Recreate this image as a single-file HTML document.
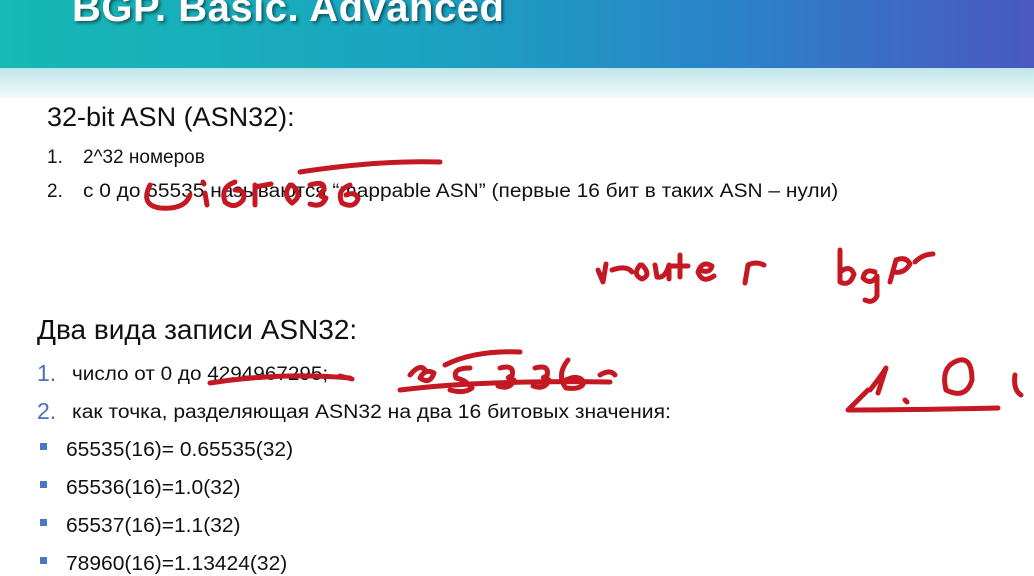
<!DOCTYPE html>
<html><head><meta charset="utf-8"><style>
html,body{margin:0;padding:0;width:1034px;height:575px;overflow:hidden;background:#fff;font-family:"Liberation Sans","DejaVu Sans",sans-serif;color:#111}
.hdr{position:absolute;left:0;top:0;width:1034px;height:68px;background:linear-gradient(90deg,#17b8b5 0%,#1aa4c0 40%,#2a84c8 70%,#4a58c0 100%)}
.fade{position:absolute;left:0;top:68px;width:1034px;height:30px;background:linear-gradient(180deg,#bfe6ea 0%,#f4f8fb 100%)}
.title{position:absolute;left:72px;top:-14px;font-size:40px;color:#fff;font-weight:bold;text-shadow:2px 2px 3px rgba(0,0,0,.5);letter-spacing:0.5px}
.t{position:absolute;white-space:nowrap;transform-origin:left top}
.h{font-size:27px}
.s{font-size:19px}
.n{color:#4a70b8}
.b{position:absolute;width:7px;height:7px;background:#4a78c8}
</style></head><body>
<div class="hdr"></div><div class="fade"></div>
<div class="title">BGP. Basic. Advanced</div>
<div class="t h" style="left:47px;top:102px">32-bit ASN (ASN32):</div>
<div class="t s" style="left:47px;top:147px">1.<span style="position:absolute;left:36px">2^32 номеров</span></div>
<div class="t s" style="left:47px;top:181px">2.<span style="position:absolute;left:36px;transform:scaleX(1.1);transform-origin:left">с 0 до 65535 называются “mappable ASN” (первые 16 бит в таких ASN – нули)</span></div>
<div class="t h" style="left:37px;top:314px;font-size:28px">Два вида записи ASN32:</div>
<div class="t s" style="left:37px;top:360px"><span class="n" style="font-size:23px">1.</span><span style="position:absolute;left:35px;top:4px;transform:scaleX(1.09);transform-origin:left">число от 0 до 4294967295;</span></div>
<div class="t s" style="left:37px;top:398px"><span class="n" style="font-size:23px">2.</span><span style="position:absolute;left:35px;top:4px;transform:scaleX(1.11);transform-origin:left">как точка, разделяющая ASN32 на два 16 битовых значения:</span></div>
<div class="b" style="left:40px;top:443px"></div><div class="t s" style="left:66px;top:439px;font-size:20px;transform:scaleX(1.05)">65535(16)= 0.65535(32)</div>
<div class="b" style="left:40px;top:481px"></div><div class="t s" style="left:66px;top:477px;font-size:20px;transform:scaleX(1.05)">65536(16)=1.0(32)</div>
<div class="b" style="left:40px;top:519px"></div><div class="t s" style="left:66px;top:515px;font-size:20px;transform:scaleX(1.05)">65537(16)=1.1(32)</div>
<div class="b" style="left:40px;top:557px"></div><div class="t s" style="left:66px;top:553px;font-size:20px;transform:scaleX(1.05)">78960(16)=1.13424(32)</div>
<svg style="position:absolute;left:0;top:0" width="1034" height="575" fill="none" stroke="#c41822" stroke-width="5" stroke-linecap="round" stroke-linejoin="round">
<path d="M150 185 Q140 205 160 208 Q185 210 190 195"/>
<path d="M205 193 l2 12"/><path d="M203 182 l1 2"/>
<path d="M235 182 q-15 5 -10 20 q10 8 18 -2 q4 -10 -8 -10"/>
<path d="M255 185 l0 20 M255 187 l16 -3"/>
<path d="M290 185 q-8 10 2 18 q12 -8 0 -18"/>
<path d="M310 185 q15 -5 14 5 q-8 6 2 8 q-4 10 -16 6"/>
<path d="M350 185 q-14 5 -8 18 q12 6 16 -4 q-2 -8 -12 -4"/>
<path d="M300 172 Q380 160 440 162"/>
<path d="M598 270 l5 12 l3 -18 M612 270 q15 -5 20 2 M640 265 q-8 10 2 14 q10 -4 0 -14 M655 265 l2 12 q8 2 12 -12 l0 14 M680 255 l0 22 M672 266 l16 0 M700 270 q10 4 12 -4 q-10 -6 -14 6 q4 12 16 4"/>
<path d="M745 283 l3 -18 q8 -4 16 0"/>
<path d="M840 250 l0 32 q10 5 14 -8 q-4 -10 -14 -2 M875 272 q-10 -4 -12 6 q8 8 14 -2 l0 20 q-4 8 -12 4 M890 282 l6 -22 q10 -4 14 4 q-6 10 -16 8 M915 262 q8 -8 18 -8"/>
<path d="M210 383 Q280 372 350 378 M340 376 l12 3"/>
<path d="M410 375 q10 -12 15 -5 M420 378 q5 -10 14 -5 q-4 12 -14 5"/>
<path d="M470 368 q-18 0 -14 10 q10 2 16 10 q-8 6 -22 2"/>
<path d="M500 368 q15 -4 12 8 q-8 2 2 4 q-4 10 -16 6"/>
<path d="M535 368 q15 -4 12 8 q-8 2 2 4 q-4 10 -16 6"/>
<path d="M568 360 q-12 15 -2 28 q16 2 18 -6 q-6 -8 -18 -2"/>
<path d="M600 375 q10 -6 15 0"/>
<path d="M400 390 Q480 380 610 382"/>
<path d="M445 365 Q475 350 520 352"/>
<path d="M868 390 q-15 15 -20 20 q60 0 150 -2"/>
<path d="M870 390 q12 -15 16 -22 l-8 25"/>
<path d="M905 400 l2 2"/>
<path d="M960 360 q-20 5 -14 30 q20 10 26 -10 q0 -22 -12 -20"/>
<path d="M1015 375 q-2 15 6 20"/>
</svg>
</body></html>
